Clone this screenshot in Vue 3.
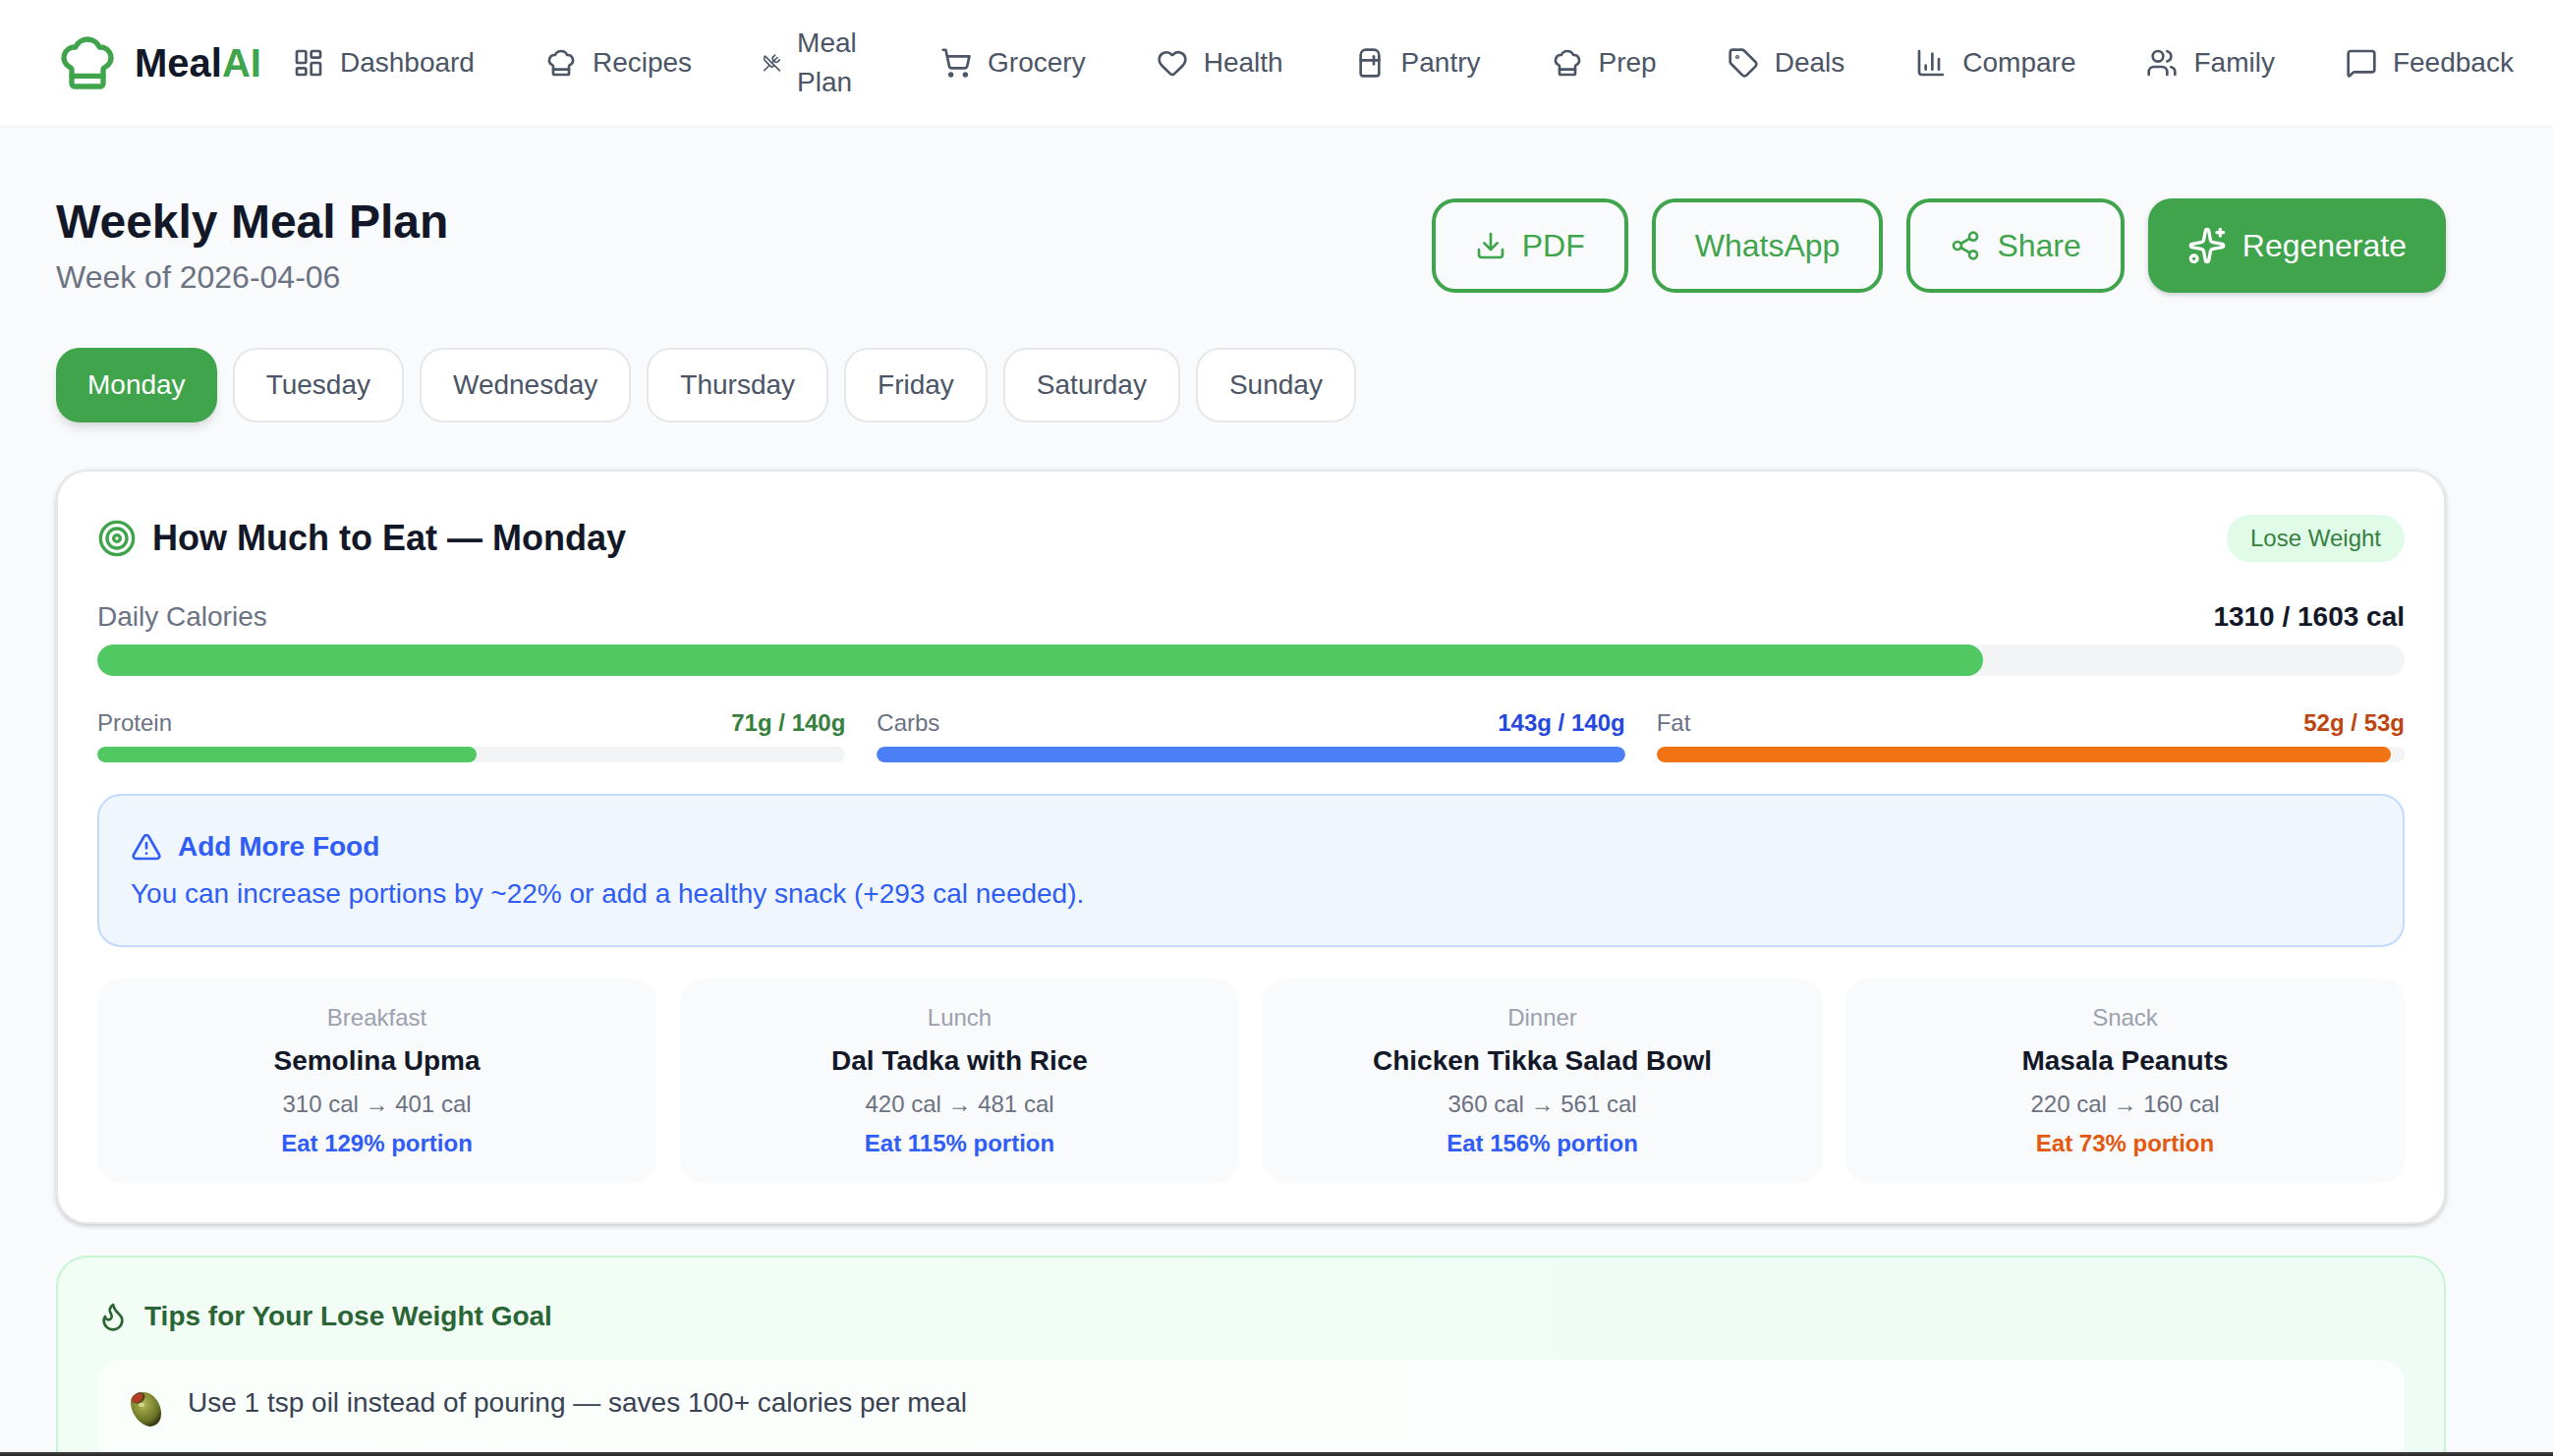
<template>
  <div class="screen">
    <header class="topbar">
      <a href="#" class="brand">
        <svg class="icon icon-logo" viewBox="0 0 24 24" aria-hidden="true"><path v-for="d in icons.chef" :key="d" :d="d" /></svg>
        <span>Meal<span class="brand-accent">AI</span></span>
      </a>
      <nav class="nav">
        <a v-for="item in navItems" :key="item.label" href="#" class="nav-link" :class="{ wrapped: item.wrapped }">
          <svg class="icon" viewBox="0 0 24 24" aria-hidden="true"><path v-for="d in icons[item.icon]" :key="d" :d="d" /></svg>
          <span>{{ item.label }}</span>
        </a>
      </nav>
    </header>

    <main class="page">
      <section class="page-head">
        <div>
          <h1>Weekly Meal Plan</h1>
          <p class="week">Week of 2026-04-06</p>
        </div>
        <div class="actions">
          <button type="button" class="btn">
            <svg class="icon" viewBox="0 0 24 24" aria-hidden="true"><path v-for="d in icons.download" :key="d" :d="d" /></svg>
            PDF
          </button>
          <button type="button" class="btn">WhatsApp</button>
          <button type="button" class="btn">
            <svg class="icon" viewBox="0 0 24 24" aria-hidden="true"><path v-for="d in icons.share" :key="d" :d="d" /></svg>
            Share
          </button>
          <button type="button" class="btn btn-primary">
            <svg class="icon icon-lg" viewBox="0 0 24 24" aria-hidden="true"><path v-for="d in icons.sparkles" :key="d" :d="d" /></svg>
            Regenerate
          </button>
        </div>
      </section>

      <div class="days">
        <button v-for="day in days" :key="day" type="button" class="day" :class="{ active: day === selectedDay }" @click="selectedDay = day">
          {{ day }}
        </button>
      </div>

      <section class="card">
        <div class="row card-head">
          <h2>
            <svg class="icon icon-lg" viewBox="0 0 24 24" aria-hidden="true"><path v-for="d in icons.target" :key="d" :d="d" /></svg>
            How Much to Eat — {{ selectedDay }}
          </h2>
          <span class="pill">Lose Weight</span>
        </div>

        <div class="calories">
          <div class="row">
            <span class="muted">Daily Calories</span>
            <strong>{{ calories.eaten }} / {{ calories.goal }} cal</strong>
          </div>
          <div class="track track-lg">
            <div class="fill green" :style="{ width: percent(calories.eaten, calories.goal) }"></div>
          </div>
        </div>

        <div class="macros">
          <div v-for="m in macros" :key="m.name" class="macro">
            <div class="row">
              <span class="muted">{{ m.name }}</span>
              <strong :class="m.color">{{ m.eaten }}g / {{ m.goal }}g</strong>
            </div>
            <div class="track">
              <div class="fill" :class="m.color" :style="{ width: percent(m.eaten, m.goal) }"></div>
            </div>
          </div>
        </div>

        <div class="notice">
          <h3>
            <svg class="icon" viewBox="0 0 24 24" aria-hidden="true"><path v-for="d in icons.alert" :key="d" :d="d" /></svg>
            Add More Food
          </h3>
          <p>You can increase portions by ~22% or add a healthy snack (+293 cal needed).</p>
        </div>

        <div class="meals">
          <article v-for="meal in meals" :key="meal.type" class="meal">
            <p class="meal-type">{{ meal.type }}</p>
            <h4>{{ meal.name }}</h4>
            <p class="muted">{{ meal.from }} cal → {{ meal.to }} cal</p>
            <p class="portion" :class="{ less: meal.portion < 100 }">Eat {{ meal.portion }}% portion</p>
          </article>
        </div>
      </section>

      <section class="tips">
        <h3>
          <svg class="icon" viewBox="0 0 24 24" aria-hidden="true"><path v-for="d in icons.flame" :key="d" :d="d" /></svg>
          Tips for Your Lose Weight Goal
        </h3>
        <ul>
          <li>
            <svg class="olive" viewBox="0 0 44 56" aria-hidden="true">
              <defs>
                <radialGradient id="oliveSkin" cx="0.42" cy="0.34" r="0.68">
                  <stop offset="0" stop-color="#b3ba58" />
                  <stop offset="0.35" stop-color="#8f983d" />
                  <stop offset="0.75" stop-color="#6a7227" />
                  <stop offset="1" stop-color="#363a10" />
                </radialGradient>
              </defs>
              <path d="M2 19C2 12 8 9 15 9C25 9 33 20 33 31C33 39 28 44 21 44C11 42 2 31 2 19Z" fill="url(#oliveSkin)" />
              <ellipse cx="10" cy="15" rx="7" ry="5" transform="rotate(-32 10 15)" fill="#43451a" />
              <ellipse cx="9" cy="15" rx="6" ry="4" transform="rotate(-32 9 15)" fill="#b43c26" />
              <ellipse cx="13" cy="22" rx="3" ry="2" fill="#e8ecb4" opacity="0.65" />
            </svg>
            <span>Use 1 tsp oil instead of pouring — saves 100+ calories per meal</span>
          </li>
        </ul>
      </section>
    </main>
    <div class="bottom-edge"></div>
  </div>
</template>

<script setup>
import { ref } from 'vue'

const selectedDay = ref('Monday')
const days = ['Monday', 'Tuesday', 'Wednesday', 'Thursday', 'Friday', 'Saturday', 'Sunday']

const navItems = [
  { label: 'Dashboard', icon: 'dashboard' },
  { label: 'Recipes', icon: 'chef' },
  { label: 'Meal Plan', icon: 'utensils', wrapped: true },
  { label: 'Grocery', icon: 'cart' },
  { label: 'Health', icon: 'heart' },
  { label: 'Pantry', icon: 'fridge' },
  { label: 'Prep', icon: 'chef' },
  { label: 'Deals', icon: 'tag' },
  { label: 'Compare', icon: 'chart' },
  { label: 'Family', icon: 'users' },
  { label: 'Feedback', icon: 'message' },
]

const calories = { eaten: 1310, goal: 1603 }

const macros = [
  { name: 'Protein', eaten: 71, goal: 140, color: 'green' },
  { name: 'Carbs', eaten: 143, goal: 140, color: 'blue' },
  { name: 'Fat', eaten: 52, goal: 53, color: 'orange' },
]

const meals = [
  { type: 'Breakfast', name: 'Semolina Upma', from: 310, to: 401, portion: 129 },
  { type: 'Lunch', name: 'Dal Tadka with Rice', from: 420, to: 481, portion: 115 },
  { type: 'Dinner', name: 'Chicken Tikka Salad Bowl', from: 360, to: 561, portion: 156 },
  { type: 'Snack', name: 'Masala Peanuts', from: 220, to: 160, portion: 73 },
]

function percent(value, goal) {
  return `${Math.min(100, (value / goal) * 100)}%`
}

// Stroke icons on a 24x24 grid
const icons = {
  chef: [
    'M17 21a1 1 0 0 0 1-1v-5.35c0-.457.316-.844.727-1.041a4 4 0 0 0-2.134-7.589 5 5 0 0 0-9.186 0 4 4 0 0 0-2.134 7.588c.411.198.727.584.727 1.041V20a1 1 0 0 0 1 1Z',
    'M6 17h12',
  ],
  dashboard: [
    'M4 3h5a1 1 0 0 1 1 1v7a1 1 0 0 1-1 1H4a1 1 0 0 1-1-1V4a1 1 0 0 1 1-1Z',
    'M15 3h5a1 1 0 0 1 1 1v3a1 1 0 0 1-1 1h-5a1 1 0 0 1-1-1V4a1 1 0 0 1 1-1Z',
    'M15 12h5a1 1 0 0 1 1 1v7a1 1 0 0 1-1 1h-5a1 1 0 0 1-1-1v-7a1 1 0 0 1 1-1Z',
    'M4 16h5a1 1 0 0 1 1 1v3a1 1 0 0 1-1 1H4a1 1 0 0 1-1-1v-3a1 1 0 0 1 1-1Z',
  ],
  utensils: [
    'm16 2-2.3 2.3a3 3 0 0 0 0 4.2l1.8 1.8a3 3 0 0 0 4.2 0L22 8',
    'M15 15 3.3 3.3a4.2 4.2 0 0 0 0 6l7.3 7.3c.7.7 2 .7 2.8 0L15 15Zm0 0 7 7',
    'm2.1 21.8 6.4-6.3',
    'm19 5-7 7',
  ],
  cart: [
    'M2.05 2.05h2l2.66 12.42a2 2 0 0 0 2 1.58h9.78a2 2 0 0 0 1.95-1.57l1.65-7.43H5.12',
    'M7 21a1 1 0 1 0 2 0 1 1 0 1 0-2 0Z',
    'M18 21a1 1 0 1 0 2 0 1 1 0 1 0-2 0Z',
  ],
  heart: [
    'M2 9.5a5.5 5.5 0 0 1 9.591-3.676.56.56 0 0 0 .818 0A5.49 5.49 0 0 1 22 9.5c0 2.29-1.5 4-3 5.5l-5.492 5.313a2 2 0 0 1-3 .019L5 15c-1.5-1.5-3-3.2-3-5.5',
  ],
  fridge: ['M5 6a4 4 0 0 1 4-4h6a4 4 0 0 1 4 4v14a2 2 0 0 1-2 2H7a2 2 0 0 1-2-2Z', 'M5 10h14', 'M15 7v6'],
  tag: [
    'M12.586 2.586A2 2 0 0 0 11.172 2H4a2 2 0 0 0-2 2v7.172a2 2 0 0 0 .586 1.414l8.704 8.704a2.426 2.426 0 0 0 3.42 0l6.58-6.58a2.426 2.426 0 0 0 0-3.42z',
    'M7 7.5a.5.5 0 1 0 1 0 .5.5 0 1 0-1 0Z',
  ],
  chart: ['M3 3v16a2 2 0 0 0 2 2h16', 'M18 17V9', 'M13 17V5', 'M8 17v-3'],
  users: [
    'M16 21v-2a4 4 0 0 0-4-4H6a4 4 0 0 0-4 4v2',
    'M16 3.128a4 4 0 0 1 0 7.744',
    'M22 21v-2a4 4 0 0 0-3-3.87',
    'M5 7a4 4 0 1 0 8 0 4 4 0 1 0-8 0Z',
  ],
  message: [
    'M22 17a2 2 0 0 1-2 2H6.828a2 2 0 0 0-1.414.586l-2.202 2.202A.71.71 0 0 1 2 21.286V5a2 2 0 0 1 2-2h16a2 2 0 0 1 2 2z',
  ],
  download: ['M12 15V3', 'M21 15v4a2 2 0 0 1-2 2H5a2 2 0 0 1-2-2v-4', 'm7 10 5 5 5-5'],
  share: [
    'M15 5a3 3 0 1 0 6 0 3 3 0 1 0-6 0Z',
    'M3 12a3 3 0 1 0 6 0 3 3 0 1 0-6 0Z',
    'M15 19a3 3 0 1 0 6 0 3 3 0 1 0-6 0Z',
    'M8.59 13.51 15.42 17.49',
    'M15.41 6.51 8.59 10.49',
  ],
  sparkles: [
    'M11.017 2.814a1 1 0 0 1 1.966 0l1.051 5.558a2 2 0 0 0 1.594 1.594l5.558 1.051a1 1 0 0 1 0 1.966l-5.558 1.051a2 2 0 0 0-1.594 1.594l-1.051 5.558a1 1 0 0 1-1.966 0l-1.051-5.558a2 2 0 0 0-1.594-1.594l-5.558-1.051a1 1 0 0 1 0-1.966l5.558-1.051a2 2 0 0 0 1.594-1.594z',
    'M20 2v4',
    'M22 4h-4',
    'M2 20a2 2 0 1 0 4 0 2 2 0 1 0-4 0Z',
  ],
  target: [
    'M2 12a10 10 0 1 0 20 0 10 10 0 1 0-20 0Z',
    'M6 12a6 6 0 1 0 12 0 6 6 0 1 0-12 0Z',
    'M10 12a2 2 0 1 0 4 0 2 2 0 1 0-4 0Z',
  ],
  alert: ['m21.73 18-8-14a2 2 0 0 0-3.48 0l-8 14A2 2 0 0 0 4 21h16a2 2 0 0 0 1.73-3', 'M12 9v4', 'M12 17h.01'],
  flame: [
    'M12 3q1 4 4 6.5t3 5.5a1 1 0 0 1-14 0 5 5 0 0 1 1-3 1 1 0 0 0 5 0c0-2-1.5-3-1.5-5q0-2 2.5-4',
  ],
}
</script>

<style>
body {
  margin: 0;
  background: #f9fafc;
}
</style>

<style scoped>
.screen {
  display: flex;
  flex-direction: column;
  height: 100vh;
  overflow: hidden;
  font-family: 'Liberation Sans', Arial, sans-serif;
  font-size: 28px;
  line-height: 40px;
  color: #121828;
  background: #f9fafc;
}

h1, h2, h3, h4, p, ul { margin: 0; padding: 0; }

a { color: inherit; text-decoration: none; }

button { font: inherit; cursor: pointer; }

.icon {
  width: 32px;
  height: 32px;
  flex-shrink: 0;
  fill: none;
  stroke: currentColor;
  stroke-width: 2;
  stroke-linecap: round;
  stroke-linejoin: round;
}

.icon-lg { width: 40px; height: 40px; }
.icon-logo { width: 64px; height: 64px; color: #3fa44b; }

.topbar {
  display: flex;
  align-items: center;
  flex-shrink: 0;
  height: 128px;
  padding-left: 57px;
  background: #fff;
  border-bottom: 2px solid #f3f4f6;
}

.brand {
  display: flex;
  align-items: center;
  gap: 16px;
  font-size: 40px;
  font-weight: bold;
}

.brand-accent { color: #3fa44b; }

.nav { display: flex; align-items: center; gap: 8px; color: #4b5565; }

.nav-link {
  display: flex;
  align-items: center;
  gap: 16px;
  padding: 0 32px;
  white-space: nowrap;
}

.nav-link.wrapped { white-space: normal; }
.nav-link.wrapped .icon { width: 19px; }
.nav-link.wrapped span { width: 74px; }

.page {
  flex: 1;
  min-height: 0;
  overflow: hidden;
  padding: 64px 109px 0 57px;
}

.page-head { display: flex; justify-content: space-between; align-items: center; }

h1 { font-size: 48px; line-height: 64px; }

.week { font-size: 32px; line-height: 48px; color: #6b7282; }

.actions { display: flex; gap: 24px; }

.btn {
  display: flex;
  align-items: center;
  gap: 16px;
  height: 96px;
  padding: 0 40px;
  border: 4px solid #3fa44b;
  border-radius: 24px;
  background: transparent;
  color: #3fa44b;
  font-size: 32px;
}

.btn-primary {
  border: none;
  background: #3fa44b;
  color: #fff;
  box-shadow: 0 2px 6px rgba(0, 0, 0, 0.1), 0 2px 4px rgba(0, 0, 0, 0.1);
}

.days { display: flex; gap: 16px; margin: 48px 0; }

.day {
  padding: 16px 32px;
  border: 2px solid #e5e7eb;
  border-radius: 24px;
  background: #fff;
  color: #4b5565;
}

.day.active {
  border: none;
  background: #3fa44b;
  color: #fff;
  box-shadow: 0 8px 12px -2px rgba(0, 0, 0, 0.1), 0 4px 8px -4px rgba(0, 0, 0, 0.1);
}

.card {
  padding: 40px;
  border: 2px solid #e5e7eb;
  border-radius: 32px;
  background: #fff;
  box-shadow: 0 2px 6px rgba(0, 0, 0, 0.1), 0 2px 4px rgba(0, 0, 0, 0.1);
}

.row { display: flex; justify-content: space-between; align-items: center; }

h2 {
  display: flex;
  align-items: center;
  gap: 16px;
  font-size: 36px;
  line-height: 56px;
}

h2 .icon { color: #3fa44b; }

.pill {
  padding: 8px 24px;
  border-radius: 24px;
  background: #e0fbe8;
  color: #37803f;
  font-size: 24px;
  line-height: 32px;
}

.muted { color: #6b7282; }

.calories { margin-top: 32px; }

.track {
  height: 16px;
  margin-top: 8px;
  border-radius: 16px;
  background: #f3f4f6;
  overflow: hidden;
}

.track-lg { height: 32px; }

.fill { height: 100%; border-radius: 16px; }
.fill.green { background: #51c862; }
.fill.blue { background: #4a7ff7; }
.fill.orange { background: #f27314; }

strong.green { color: #37803f; }
strong.blue { color: #2649dd; }
strong.orange { color: #bd450f; }

.macros {
  display: grid;
  grid-template-columns: repeat(3, 1fr);
  gap: 32px;
  margin: 32px 0;
  font-size: 24px;
  line-height: 32px;
}

.notice {
  padding: 32px;
  border: 2px solid #c2dafc;
  border-radius: 24px;
  background: #eff6fe;
  color: #2f5df5;
}

h3 { display: flex; align-items: center; gap: 16px; font-size: 28px; }

.notice p { margin-top: 8px; }

.meals {
  display: grid;
  grid-template-columns: repeat(4, 1fr);
  gap: 24px;
  margin-top: 32px;
}

.meal {
  display: flex;
  flex-direction: column;
  gap: 8px;
  padding: 24px;
  border-radius: 24px;
  background: #f9fafc;
  text-align: center;
  font-size: 24px;
  line-height: 32px;
}

.meal h4 { font-size: 28px; line-height: 40px; }

.meal-type { color: #9ba1ae; }

.portion { color: #2f5df5; font-weight: bold; }
.portion.less { color: #e2590f; }

.tips {
  margin-top: 32px;
  padding: 40px;
  border: 2px solid #c5f6d3;
  border-radius: 32px;
  background: linear-gradient(to right, #f2fdf5, #eefcf5);
}

.tips h3 { color: #2b6536; }

.tips ul { margin-top: 24px; list-style: none; }

.tips li {
  display: flex;
  align-items: flex-start;
  gap: 16px;
  padding: 24px 32px;
  border-radius: 24px;
  background: rgba(255, 255, 255, 0.7);
  color: #394252;
}

.olive { width: 44px; height: 56px; flex-shrink: 0; }

.bottom-edge {
  flex-shrink: 0;
  height: 2px;
  background: #2b2b2c;
  border-top: 2px solid #3e3e3f;
}
</style>
